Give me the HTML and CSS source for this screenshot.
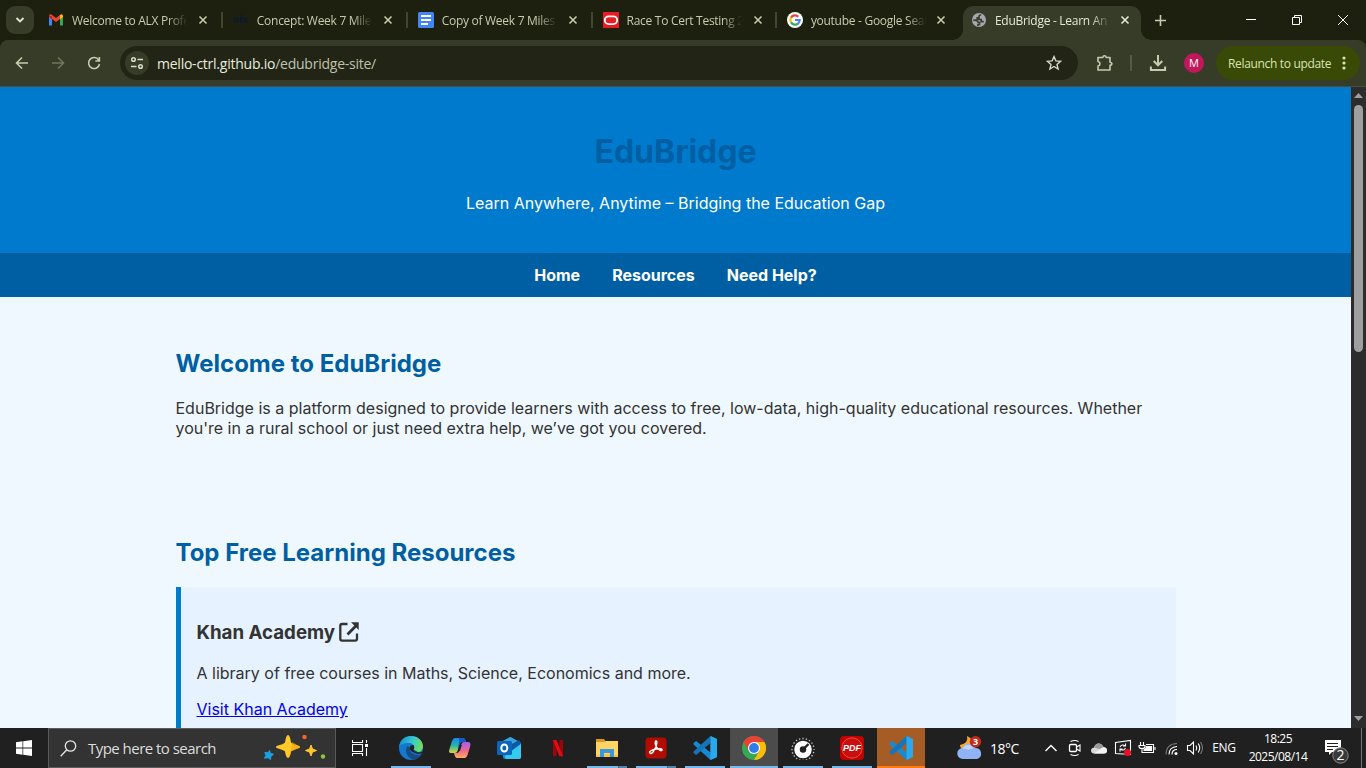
FILE: index.html
```html
<!DOCTYPE html>
<html lang="en">
<head>
<meta charset="utf-8">
<title>EduBridge - Learn Anywhere</title>
<link rel="stylesheet" href="styles.css">
</head>
<body>
<div class="screen">
  <div class="tabstrip">
    <div class="tab-search"><svg width="10" height="8" viewBox="0 0 10 8"><path d="M1.5 2 5 5.5 8.5 2" fill="none" stroke="#e2e5cd" stroke-width="1.9"/></svg></div>
    <div class="tab">
      <svg class="fav" viewBox="0 0 16 16"><path d="M1 4v9.5h3V7z" fill="#4285f4"/><path d="M12 7v6.500h3V4z" fill="#34a853"/><path d="M1 4.500V4q.2-2.300 2.500-1.500L8 6l4.500-3.500L12 7 8 10 4 7z" fill="#ea4335"/><path d="M12 3q2.500-2 3 1v1l-3 2.500z" fill="#fbbc04"/><path d="M1 4v1l3 2.500V4z" fill="#c5221f"/></svg>
      <span class="title">Welcome to ALX Profe</span><svg class="x" viewBox="0 0 10 10"><path d="m1.500 1.500 7 7m0-7-7 7"/></svg>
    </div>
    <div class="tab">
      <span class="fav alx">alx</span>
      <span class="title">Concept: Week 7 Miles</span><svg class="x" viewBox="0 0 10 10"><path d="m1.500 1.500 7 7m0-7-7 7"/></svg>
    </div>
    <div class="tab">
      <svg class="fav" viewBox="0 0 16 16"><rect width="16" height="16" rx="1.500" fill="#4285f4"/><path d="M3 4h10M3 8h10M3 12h7" stroke="#fff" stroke-width="2"/></svg>
      <span class="title">Copy of Week 7 Miles</span><svg class="x" viewBox="0 0 10 10"><path d="m1.500 1.500 7 7m0-7-7 7"/></svg>
    </div>
    <div class="tab">
      <svg class="fav" viewBox="0 0 16 16"><rect width="16" height="16" fill="#ea1b22"/><rect x="1.800" y="4.300" width="12.400" height="7.800" rx="3.900" fill="none" stroke="#fff" stroke-width="1.800"/></svg>
      <span class="title">Race To Cert Testing 2</span><svg class="x" viewBox="0 0 10 10"><path d="m1.500 1.500 7 7m0-7-7 7"/></svg>
    </div>
    <div class="tab last">
      <svg class="fav" viewBox="0 0 16 16"><circle cx="8" cy="8" r="8" fill="#fff"/><g fill="none" stroke-width="2.200"><path d="M11.300 4.700A4.700 4.700 0 0 0 4 5.600" stroke="#ea4335"/><path d="M4 5.600a4.700 4.700 0 0 0 0 4.800" stroke="#fbbc04"/><path d="M4 10.400a4.700 4.700 0 0 0 7 1.200" stroke="#34a853"/><path d="M11 11.600A4.700 4.700 0 0 0 12.700 8H8" stroke="#4285f4"/></g></svg>
      <span class="title">youtube - Google Sear</span><svg class="x" viewBox="0 0 10 10"><path d="m1.500 1.500 7 7m0-7-7 7"/></svg>
    </div>
    <div class="tab active">
      <svg class="fav" viewBox="0 0 16 16"><circle cx="8" cy="8" r="7" fill="#a3a8b1"/><path d="M10.300 3q-2.300-.2-2.300 1.700v1.200H6.200v1.600h4v2.200h2.600M2.300 8.300q3.200-.5 4 .8.700 1.400 2.200 1.400v2H7v1.500" fill="none" stroke="#3b402d" stroke-width="1.700"/></svg>
      <span class="title">EduBridge - Learn An</span><svg class="x" viewBox="0 0 10 10"><path d="m1.500 1.500 7 7m0-7-7 7"/></svg>
    </div>
    <div class="newtab"><svg width="11" height="11" viewBox="0 0 11 11"><path d="M5.500 0v11M0 5.500h11" stroke="#c6cbae" stroke-width="1.600"/></svg></div>
    <div class="controls">
      <svg viewBox="0 0 12 12"><path d="M1 5.500h10" /></svg>
      <svg viewBox="0 0 12 12"><path d="M1.500 3.500h7v7h-7zM3.500 3.500v-2h7v7h-2"/></svg>
      <svg viewBox="0 0 12 12"><path d="m1 1 10 10M11 1 1 11"/></svg>
    </div>
  </div>

  <div class="toolbar">
    <svg class="nav-icon" viewBox="0 0 16 16"><path d="M14 8H2.500M8 2.500 2.500 8 8 13.500"/></svg>
    <svg class="nav-icon dim" viewBox="0 0 16 16"><path d="M2 8h11.500M8 2.500l5.500 5.500L8 13.500"/></svg>
    <svg class="nav-icon" viewBox="0 0 16 16"><path d="M12.700 5A5.500 5.500 0 1 0 13.500 9M13.400 2v4h-4"/></svg>
    <div class="omnibox">
      <span class="site-info"><svg width="14" height="14" viewBox="0 0 14 14" fill="none" stroke="#d9dcc6" stroke-width="1.500"><circle cx="3.500" cy="3.500" r="1.800"/><path d="M7.500 3.500H13M1 10.500h5.500"/><circle cx="10.500" cy="10.500" r="1.800"/></svg></span>
      <span class="url">mello-ctrl.github.io<span>/edubridge-site/</span></span>
      <svg class="star" viewBox="0 0 16 16"><path d="m8 1.600 1.900 4.300 4.700.4-3.600 3.100 1.100 4.600L8 11.500 3.900 14 5 9.400 1.400 6.300l4.700-.4z" fill="none" stroke="#d4d7c4" stroke-width="1.400"/></svg>
    </div>
    <svg class="ext" viewBox="0 0 18 18"><path d="M2 3.500h4.800Q7 1.800 8.500 1.800T10.200 3.500H14v4.700q1.900.1 1.900 1.600T14 11.400V16H2v-4q2-.4 2-2.200T2 7.500z" fill="none" stroke="#c6cbae" stroke-width="1.600" stroke-linejoin="round"/></svg>
    <span class="divider"></span>
    <svg class="download" viewBox="0 0 18 18"><path d="M9 1v10M4.700 7 9 11.300 13.300 7M1.900 12.500V16h14.200v-3.500" fill="none" stroke="#c6cbae" stroke-width="2"/></svg>
    <span class="avatar">M</span>
    <div class="relaunch"><span>Relaunch to update</span><svg width="4" height="14" viewBox="0 0 4 14" fill="#d9e3b0"><circle cx="2" cy="2" r="1.600"/><circle cx="2" cy="7" r="1.600"/><circle cx="2" cy="12" r="1.600"/></svg></div>
  </div>

  <div class="viewport">
    <div class="page">
      <header class="hero"><h1>EduBridge</h1><p>Learn Anywhere, Anytime – Bridging the Education Gap</p></header>
      <nav class="site-nav"><a>Home</a><a>Resources</a><a>Need Help?</a></nav>
      <main>
        <section>
          <h2>Welcome to EduBridge</h2>
          <p>EduBridge is a platform designed to provide learners with access to free, low-data, high-quality educational resources. Whether you're in a rural school or just need extra help, we’ve got you covered.</p>
        </section>
        <section>
          <h2>Top Free Learning Resources</h2>
          <article class="card">
            <h3>Khan Academy <svg width="20" height="20" viewBox="0 0 20 20"><path d="M8.500 2H3.200Q1.300 2 1.300 3.900v12.900q0 1.900 1.900 1.900h12.900q1.900 0 1.900-1.900V11.500" fill="none" stroke="#333" stroke-width="2.300"/><path d="M12 .3h7.700V8l-2.400-2.400-7.800 7.800-2-2 7.800-7.800z" fill="#333"/></svg></h3>
            <p>A library of free courses in Maths, Science, Economics and more.</p>
            <p><a class="link" href="#">Visit Khan Academy</a></p>
          </article>
        </section>
      </main>
    </div>
    <div class="scrollbar">
      <svg width="9" height="5" viewBox="0 0 9 5"><path d="M0 5 4.500 0 9 5z" fill="#9f9f9f"/></svg>
      <span class="thumb"></span>
      <svg width="9" height="5" viewBox="0 0 9 5"><path d="m0 0 4.500 5L9 0z" fill="#9f9f9f"/></svg>
    </div>
  </div>

  <div class="taskbar">
    <div class="start"><svg width="16" height="16" viewBox="0 0 16 16" fill="#fff"><path d="m0 2.200 6.500-.9v6.300H0zM7.200 1.200 16 0v7.600H7.200zM0 8.400h6.500v6.300L0 13.800zM7.200 8.400H16V16l-8.800-1.200z"/></svg></div>
    <div class="search">
      <svg width="17" height="17" viewBox="0 0 17 17" fill="none" stroke="#e6e6e6" stroke-width="1.300"><circle cx="10.500" cy="6" r="5.200"/><path d="M6.800 9.800.7 16.200"/></svg>
      <span>Type here to search</span>
      <svg class="sparkle" width="62" height="26" viewBox="0 0 62 26"><path d="M24 0q2 0 3 7.500 1 1.500 8.500 3.500 1 1 0 2-7.500 2-8.500 3.500Q26 23 24 23t-3-6.500Q20 15 12.500 13q-1-1 0-2Q20 9 21 7.500 22 0 24 0z" fill="#ffc928"/><path d="M28 7q7 4 7.800 5-.8 1-8.800 4.500-1 6.500-3 6.500 4-8 4-16z" fill="#f5a50b" opacity=".65"/><path d="m47 10 1.500 4 4 1.500-4 1.500-1.500 4-1.500-4-4-1.500 4-1.500z" fill="#ffc928" stroke="#ffc928"/><path d="m5.500 15.500 1 3 3 .7-2.500 2-.5 3.300-2.500-1.800-3.500.5 1.500-3L.8 17.500l3.400.2z" fill="#1ba1e2" stroke="#1ba1e2" stroke-linejoin="round"/><circle cx="40.500" cy="2" r="2.200" fill="#f1662b"/><circle cx="59" cy="21.500" r="2.200" fill="#8bc63f"/></svg>
    </div>
    <div class="taskview"><svg width="17" height="16" viewBox="0 0 17 16" fill="none" stroke="#fff" stroke-width="1.100"><path d="M.5 0v2.500h10V0M.5 4.500h10v7H.5zM.5 16v-2.500h10V16M14.500 0v3M14.500 8v8"/><path d="M13 4h3v3h-3z" fill="#fff" stroke="none"/></svg></div>
    <div class="apps">
      <div class="app run"><svg viewBox="0 0 24 24"><defs><linearGradient id="eg" x1="0" y1=".3" x2="1" y2=".5"><stop stop-color="#168fd0"/><stop offset=".55" stop-color="#37c9d0"/><stop offset="1" stop-color="#73df51"/></linearGradient></defs><circle cx="12" cy="12" r="12" fill="#1478cc"/><path d="M.2 10.500C1 4 6 0 12 0c7 0 12 5 12 10.300 0 4-3 6-6 6s-4.500-1-4-2c2.500-2.500 1-7-3.500-7.300C5.800 6.500 2 8 .2 10.500z" fill="url(#eg)"/><path d="M8.500 10C5 14 8 22 14.500 23.700 18 23 21 21 22.700 18.200 18.500 20 12 18.500 11 14q-.2-2 1-3.500 1.500 1 1.500 2.500l-.5 1.500c.5 1 2 1.800 4 1.800 1 1.500 4 .5 5.700 1.900" fill="#174b83"/><path d="M14 14.300c1.500-1.500 1.600-3.500.4-5.300q-4 0-3.600 4 .7 2.500 4 3.500 3 2 8 .7l1-1.700q-3 1.300-6 .8-3-.5-3.400-2z" fill="#202020"/></svg></div>
      <div class="app"><svg viewBox="0 0 24 24"><defs><linearGradient id="c1" x1="0" y1="0" x2="0" y2="1"><stop stop-color="#1687ed"/><stop offset=".5" stop-color="#22b8a6"/><stop offset="1" stop-color="#e3d33a"/></linearGradient><linearGradient id="c2" x1="0" y1="0" x2="0" y2="1"><stop stop-color="#a35df0"/><stop offset=".55" stop-color="#f0698c"/><stop offset="1" stop-color="#ffae61"/></linearGradient></defs><path d="M7 2h8q2 0 3 4h-4q-2 0-3 4l-1.500 5q-.7 2-2.500 2H3Q0 17 1.500 13L4 5q1-3 3-3z" fill="url(#c1)"/><path d="M11 2h4q2 0 3 4h-4q-2 0-3 4L9.500 12Q12 5 11 2z" fill="#1857cb"/><path d="M17 22H9q-2 0-3-5h3q2 0 3-4l1.500-5q.7-2 2.500-2h4q3.500 0 2 5l-2.500 8q-1 3-2.500 3z" fill="url(#c2)"/><path d="m13.800 9-1.800 6h-2l1.800-6z" fill="#202020"/></svg></div>
      <div class="app"><svg viewBox="0 0 24 24"><path d="M4 7 14 1l10 6v14q0 2-2 2H8q-2 0-2-2z" fill="#168ed6"/><path d="M13 1 4 6l9 7L24 7z" fill="#3aa5dd"/><path d="M13 9l9-5 2 3.500L15 14z" fill="#0d57a3"/><path d="m24 8-16 12v1q0 2 2 2h12q2 0 2-2z" fill="#35c9ef"/><rect y="5" width="15" height="14" rx="1.500" fill="#0b65bd"/><ellipse cx="7.300" cy="12" rx="3" ry="3.500" fill="none" stroke="#fff" stroke-width="2"/></svg></div>
      <div class="app"><svg viewBox="0 0 24 24"><path d="M7 4h3.500v16L7 20.500zM13.500 4H17v16.500l-3.500-.5z" fill="#99070d"/><path d="M7 4h3.500L17 20.500l-3.700-.5z" fill="#e50914"/></svg></div>
      <div class="app run stacked"><svg viewBox="0 0 24 24"><path d="M1 3h8l2 3v4H1z" fill="#d99a15"/><path d="M1 6h8l2-1h12v16H1z" fill="#ffd463"/><path d="M5 13h14v8h-4v-4H9v4H5z" fill="#3997dd"/><path d="M1 19h4v2H1zM19 19h4v2h-4zM9 18h6v3H9z" fill="#f7c24c"/></svg></div>
      <div class="app run stacked"><svg viewBox="0 0 24 24"><rect x="1.500" y="1.500" width="21" height="21" rx="4" fill="#b30b00"/><path d="M6 17q-2-2 6-4 5-1 6 .3.500 2-2.500.7Q12 12 11.300 8q-.3-3 .7-3 1.500.5.500 3.700Q10 16 7.500 17.300 6.400 17.800 6 17z" fill="none" stroke="#fff" stroke-width="1.400"/></svg></div>
      <div class="app run"><svg viewBox="0 0 24 24"><path d="M17.500 0 24 3v18l-6.500 3L.5 8.500V7L3.200 5 17.500 16.500z" fill="#168bd2"/><path d="M17.500 0v7L3.200 19 .5 17v-1.500z" fill="#1674b8"/><path d="M17.500 0 24 3v18l-6.500 3z" fill="#2aa9ee"/></svg></div>
      <div class="app run current"><svg viewBox="0 0 24 24"><circle cx="12" cy="12" r="12" fill="#34a853"/><path d="M1.600 6A12 12 0 0 1 22.400 6L12 6.500 6.800 15z" fill="#ea4335"/><path d="M22.400 6A12 12 0 0 1 12 24l5.200-9L12 6z" fill="#fbbc05"/><circle cx="12" cy="12" r="6" fill="#fff"/><circle cx="12" cy="12" r="4.900" fill="#2f7ded"/></svg></div>
      <div class="app run"><svg viewBox="0 0 24 24"><circle cx="12" cy="13.500" r="6" fill="none" stroke="#fff" stroke-width="5.500"/><circle cx="12" cy="13.500" r="11" fill="none" stroke="#bbb" stroke-width="1.400" stroke-dasharray="1.400 2.056" stroke-dashoffset="1"/><path d="m12 13.500 5.500-5.500" stroke="#202020" stroke-width="2.400"/></svg></div>
      <div class="app run"><span class="pdf">PDF</span></div>
      <div class="app run alert"><svg viewBox="0 0 24 24"><path d="M17.500 0 24 3v18l-6.500 3L.5 8.500V7L3.200 5 17.500 16.500z" fill="#168bd2"/><path d="M17.500 0v7L3.200 19 .5 17v-1.500z" fill="#1674b8"/><path d="M17.500 0 24 3v18l-6.500 3z" fill="#2aa9ee"/></svg></div>
    </div>
    <div class="weather"><svg width="26" height="24" viewBox="0 0 26 24"><path d="M10 0q2 7-7 9 0 4 5 5l8-3Q17 3 10 0z" fill="#f6a82c"/><path d="M6 23a5.500 5.500 0 0 1-.5-11Q8 7 13 8q4 0 5.500 4a5.600 5.600 0 0 1 1.500 11z" fill="#8fb3f4"/><path d="M5.500 13Q8 8 13 9q3 1 3.500 4-3-1-5 1-3-2-6-1z" fill="#c1d5fa"/><circle cx="18.500" cy="5.700" r="5.700" fill="#c42b1c"/><text x="18.500" y="9" text-anchor="middle">3</text></svg><span>18°C</span></div>
    <div class="tray">
      <svg viewBox="0 0 24 24"><path d="m6.500 15 5.500-5.500 5.500 5.500" stroke-width="1.400"/></svg>
      <svg viewBox="0 0 24 24"><rect x="6.500" y="8.500" width="7" height="7" rx="1.200" stroke-width="1.300"/><path d="m13.500 11 3.500-2v6l-3.500-2M7.500 5.500q4-2 8 0M7.500 18.500q4 2 8 0"/></svg>
      <svg viewBox="0 0 24 24"><path d="M7 17.500q-3-.5-3-3 0-2.500 3-3Q8.500 7 12.500 7.500q3 .5 4 3.500 4 .3 3.500 4-.5 2.500-3 2.500z" fill="#d8d8d8" stroke="none"/><path d="M7 11.500Q8.500 7 12.500 7.500q3 .5 4 3.500l-4 2z" fill="#999" stroke="none"/><path d="m7 17.500 9-6q4 .3 4 3.300 0 2.700-3 2.700z" fill="#f4f4f4" stroke="none"/></svg>
      <svg viewBox="0 0 24 24"><path d="M4.500 6.500 19.500 4.500v14l-15-1zM9 11q2-3.500 5-1M14.500 7.500V10H12M14.500 12q-2 3.500-5 1M9 15.500V13h2.500"/><circle cx="16.500" cy="16.500" r="3.600" fill="#e81123" stroke="none"/></svg>
      <svg viewBox="0 0 24 24"><path d="M5.500 6v3M8.500 6v3M4 9.500h6v1q0 2-3 2-3 0-3-2zM7 13v3.500h11.500v-8H11M20 11v3"/><path d="M11 10h6v5H8.500v-1.500q2.500-1 2.500-3.500z" fill="#fff" stroke="none"/></svg>
      <svg viewBox="0 0 24 24"><g transform="translate(1 1)"><path d="M6 17.500Q6 7 17 6.500" stroke="#777"/><path d="M9 17.500Q9 10 17 9.500M12 17.500q0-5 5-5"/><circle cx="16" cy="16.500" r="1.500" fill="#fff" stroke="none"/></g></svg>
      <svg viewBox="0 0 24 24"><path d="M4.500 9.500h2.500L10.500 6v12L7 14.500H4.500zM13 9.500q1.500 2.500 0 5M15.200 7.500q3 4.500 0 9"/><path d="M17.500 6q4 6 0 12" stroke="#777"/></svg>
    </div>
    <div class="lang">ENG</div>
    <div class="clock"><span>18:25</span><span>2025/08/14</span></div>
    <div class="notif"><svg width="26" height="26" viewBox="0 0 26 26"><path d="M1 1h16v12H8l-3 3v-3H1z" fill="#fff"/><path d="M3 4.500h11M3 7.500h11M3 10.500h6" stroke="#202020" stroke-width="1.100"/><circle cx="16.500" cy="16.500" r="7.700" fill="#3a3a3a" stroke="#888"/><text x="16.500" y="21" text-anchor="middle">2</text></svg></div>
  </div>
</div>
</body>
</html>
```
FILE: styles.css
```css
* { box-sizing: border-box; }
body { margin: 0; overflow: hidden; font-family: "Open Sans", "Noto Sans", sans-serif; }
svg { display: block; flex: none; }
.screen { width: 1366px; height: 768px; display: flex; flex-direction: column; overflow: hidden; background: #1d200f; }

/* browser tabs */
.tabstrip { height: 40px; background: #1d200f; display: flex; align-items: center; font-size: 12px; color: #c6cbae; flex: none; }
.tab-search { width: 28px; height: 28px; margin: 0 4px 0 6px; border-radius: 9px; background: #373c28; display: flex; align-items: center; justify-content: center; flex: none; }
.tab { width: 184.85px; height: 40px; padding-left: 10px; display: flex; align-items: center; flex: none; background: linear-gradient(#41462f, #41462f) right 0 center / 2px 16px no-repeat; }
.tab.last { width: 185.6px; padding-left: 9.5px; background: none; }
.fav { width: 16px; height: 16px; flex: none; }
.alx { color: #10182b; font: bold 11px/14px "Open Sans", sans-serif; letter-spacing: -.5px; }
.title { width: 125px; margin: 1px 1px 0 8px; white-space: nowrap; letter-spacing: -.28px; flex: none; -webkit-mask-image: linear-gradient(90deg, #000 96px, transparent 115px); mask-image: linear-gradient(90deg, #000 96px, transparent 115px); }
.x { width: 10px; height: 10px; fill: none; stroke: #c6cbae; stroke-width: 1.6; }
.last .title { margin-right: 0; }
.tab.active { position: relative; width: 178px; height: 34px; margin-top: 6px; background: #373c28; border-radius: 10px 10px 0 0; color: #e4e7d3; padding: 0 0 6px 8px; }
.active .x { stroke: #e4e7d3; margin-left: -1px; }
.tab.active::before, .tab.active::after { content: ""; position: absolute; bottom: 0; width: 10px; height: 10px; }
.tab.active::before { left: -10px; background: radial-gradient(circle at 0 0, transparent 9.5px, #373c28 10px); }
.tab.active::after { right: -10px; background: radial-gradient(circle at 100% 0, transparent 9.5px, #373c28 10px); }
.newtab { width: 40px; display: flex; justify-content: center; }
.controls { margin-left: auto; display: flex; }
.controls svg { width: 12px; height: 12px; margin: 0 17px; fill: none; stroke: #fff; stroke-width: 1; }

/* address bar */
.toolbar { height: 47px; background: #373c28; border-bottom: 1px solid #4c4e40; border-radius: 8px 8px 0 0; display: flex; align-items: center; padding-left: 14px; flex: none; }
.nav-icon { width: 16px; height: 16px; margin-right: 20px; fill: none; stroke: #c6cbae; stroke-width: 1.6; }
.nav-icon.dim { stroke: #71765c; }
.nav-icon:nth-child(3) { margin-right: 18px; }
.omnibox { width: 958px; height: 34px; border-radius: 17px; background: #222515; display: flex; align-items: center; padding: 0 16px 0 5px; flex: none; }
.site-info { width: 24px; height: 24px; border-radius: 50%; background: #373c28; display: flex; align-items: center; justify-content: center; }
.url { margin-left: 8px; color: #e9ecdc; font-size: 14px; letter-spacing: -.24px; }
.url span { color: #bfc3ad; }
.star { width: 16px; height: 16px; margin-left: auto; }
.ext { width: 18px; height: 18px; margin-left: 18px; }
.divider { width: 2px; height: 16px; background: #555a43; margin: 0 17px 0 16px; }
.download { width: 18px; height: 18px; margin-right: 17px; }
.avatar { width: 20px; height: 20px; border-radius: 50%; background: #c2185b; color: #fff; font-size: 11px; line-height: 20px; text-align: center; flex: none; }
.relaunch { width: 144px; height: 34px; margin-left: 12px; border-radius: 17px; background: #384a06; color: #d9e3b0; display: flex; align-items: center; padding: 0 14px 0 12px; font-size: 12px; white-space: nowrap; letter-spacing: -.33px; justify-content: space-between; flex: none; }

/* web page */
.viewport { flex: 1; min-height: 0; display: flex; }
.page { width: 1351px; background: #f0f8ff; overflow: hidden; font-family: Inter, sans-serif; font-size: 16px; color: #333; }
.hero { background: #007acc; color: #fff; padding: 24px; text-align: center; height: 166px; }
h1 { color: #005fa3; font-size: 32px; margin: 21.44px 0; }
.page p { margin: 16px 0; line-height: 20px; }
.site-nav { height: 44px; background: #005fa3; display: flex; gap: 32px; justify-content: center; align-items: center; color: #fff; font-weight: 700; }
main { width: 1000px; margin: 0 auto; }
section { padding: 32px 0; display: flow-root; }
h2 { color: #005fa3; font-size: 24px; line-height: 29px; margin: 20px 0; }
.card { background: #e6f2ff; border-left: 5px solid #007acc; padding: 16px; display: flow-root; }
h3 { font-size: 18.72px; line-height: 23px; margin: 18px 0 19.44px; }
h3 svg { display: inline-block; vertical-align: -3px; }
.link { color: #0000ee; }
.scrollbar { width: 15px; background: #2c2c2c; display: flex; flex-direction: column; align-items: center; padding: 6px 0 7px; }
.thumb { width: 9px; height: 247px; margin: 7px 0 auto; border-radius: 5px; background: #9f9f9f; }

/* desktop taskbar */
.taskbar { height: 40px; background: #202020; color: #fff; display: flex; flex: none; font-size: 12px; }
.start, .taskview { width: 48px; display: flex; align-items: center; justify-content: center; flex: none; }
.search { width: 288px; background: #333; border: 1px solid #5b5b5b; display: flex; align-items: center; padding-left: 11px; font-size: 15px; color: #ddd; flex: none; }
.search span { margin-left: 11px; letter-spacing: -.53px; white-space: nowrap; }
.sparkle { margin: 0 9px 0 auto; }
.apps { display: flex; gap: 1px; margin-left: 3px; flex: none; }
.app { width: 48px; height: 40px; display: flex; align-items: center; justify-content: center; background: linear-gradient(#76b9ed, #76b9ed) center bottom / 0 2px no-repeat; }
.app svg { width: 24px; height: 24px; }
.app.run { background-size: 40px 2px; }
.app.stacked { background-image: linear-gradient(90deg, #76b9ed 31px, #416682 31px 32px, #5582a6 32px); }
.app.current { background-color: #4c4c4c; background-size: 48px 2px; }
.app.alert { background: #a55d25 linear-gradient(#ff7b0d, #ff7b0d) center bottom / 48px 2px no-repeat; }
.pdf { width: 24px; height: 24px; border-radius: 4px; background: radial-gradient(circle, #c80f0f 55%, #e04030 57% 61%, #c30000 64%); font: italic bold 9px/25px "Liberation Sans", sans-serif; text-align: center; }
.weather { margin-left: 32px; width: 82px; display: flex; align-items: center; gap: 7px; font-size: 14px; letter-spacing: -.5px; flex: none; }
.weather text { font: bold 9px "Open Sans", sans-serif; fill: #fff; letter-spacing: 0; }
.tray { display: flex; align-items: center; flex: none; }
.tray svg { width: 24px; height: 24px; fill: none; stroke: #fff; stroke-width: 1.1; }
.lang { width: 34px; text-align: center; line-height: 40px; letter-spacing: -.3px; flex: none; }
.clock { width: 74px; display: flex; flex-direction: column; align-items: center; justify-content: center; line-height: 18px; letter-spacing: -.5px; padding-bottom: 1px; flex: none; }
.notif { width: 47px; border-right: 1px solid #727272; padding: 11px 0 0 9px; flex: none; }
.notif text { font: 14px "Open Sans", sans-serif; fill: #fff; }
```
